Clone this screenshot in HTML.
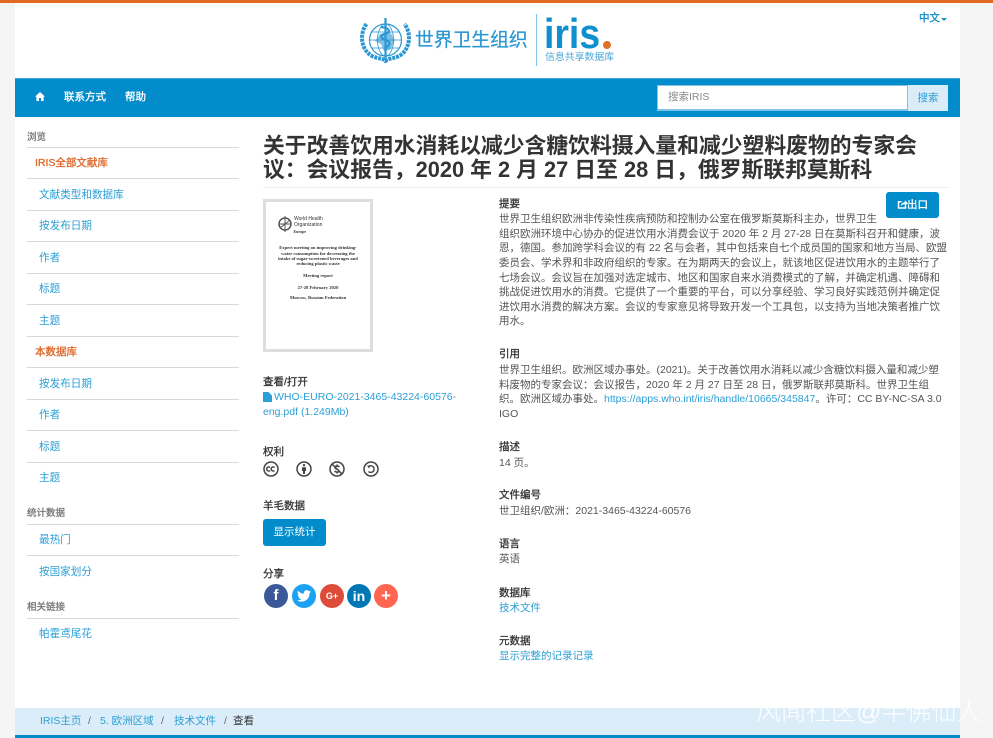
<!DOCTYPE html>
<html lang="zh"><head><meta charset="utf-8"><title>IRIS</title>
<style>
html{background:#f5f5f5}
html,body{margin:0;padding:0;width:993px;height:738px;overflow:hidden}
body{position:relative;font-family:"Liberation Sans","Noto Sans CJK SC",sans-serif;color:#555;background:#f5f5f5;filter:blur(.3px)}
.a{position:absolute;white-space:nowrap}
.t{font-size:10.5px;line-height:16px;height:16px}
a{color:#2b9fd6;text-decoration:none}
.l{position:absolute;left:27px;width:212px;height:1px;background:#d9d9d9}
.h{font-size:10.5px;line-height:16px;color:#333;font-weight:400;-webkit-text-stroke:.3px #333}
.side{font-size:10.6px;line-height:16px;color:#2b9fd6;left:39px}
.sh{font-size:9.5px;line-height:14px;color:#777;left:27px;font-weight:400;-webkit-text-stroke:.3px #777}
.or{color:#e06a2c;font-weight:400;-webkit-text-stroke:.35px #e06a2c;left:35px;font-size:10.5px;line-height:16px}
.c{position:absolute;border-radius:50%;width:24px;height:24px;color:#fff;text-align:center;font-weight:700;line-height:24px}
.cc{position:absolute;top:461px}
.b{font-size:10.5px;line-height:14.62px;color:#555}
.nv{font-size:10.5px;line-height:14px;color:#fff;-webkit-text-stroke:.3px #fff}
</style></head><body>
<div class="a" style="left:15px;top:0;width:945px;height:738px;background:#fff"></div>
<div class="a" style="left:0;top:0;width:993px;height:3px;background:#e06a24"></div>

<svg class="a" style="left:360px;top:17px" width="52" height="46" viewBox="0 0 52 46" fill="none" stroke="#2a97d2">
<circle cx="25.500" cy="23" r="16" stroke-width="1.200"/><ellipse cx="25.500" cy="23" rx="8" ry="16" stroke-width=".8"/><path d="M9.500 23H41.500M11.500 15H39.500M11.500 31H39.500" stroke-width=".8"/>
<path d="M20 17L30 15L35 23L30 33L24 34L21 27L15 24Z" fill="#2a97d2" stroke="none" opacity=".6"/>
<path d="M25.500 1V41" stroke-width="2.200"/><path d="M21 10C30 11 31 15 25.500 16.500C20 18 20 21 25.500 23C31 25 31 28 25.500 30" stroke-width="2.200"/>
<path d="M6.500 7C-1 17 1 33 12 39C18 42 23 41 25.500 44C28 41 33 42 39 39C50 33 52 17 44.500 7" stroke-width="4" stroke-dasharray="3 .9"/>
</svg>
<div class="a" style="left:415px;top:28px;font-size:18.800px;line-height:24px;color:#2a97d2;-webkit-text-stroke:.25px #2a97d2">世界卫生组织</div>
<div class="a" style="left:536px;top:14px;width:1px;height:52px;background:#84c4e6"></div>
<div class="a" style="left:544px;top:10.500px;font-size:42px;line-height:46px;font-weight:700;color:#0f8fce;transform:scaleX(.89);transform-origin:left top">iris</div>
<div class="a" style="left:603px;top:41px;width:8px;height:8px;border-radius:50%;background:#e0702a"></div>
<div class="a" style="left:545px;top:51px;font-size:9.900px;line-height:14px;color:#4ba6d8">信息共享数据库</div>
<div class="a" style="left:919px;top:11px;font-size:10.5px;line-height:14px;color:#148fcc;-webkit-text-stroke:.35px #148fcc">中文</div>
<div class="a" style="left:941px;top:18px;border:3px solid transparent;border-top-color:#148fcc;border-bottom:0"></div>

<div class="a" style="left:15px;top:78px;width:945px;height:39px;background:#038ccb;border-top:1px solid #3aa6da;box-sizing:border-box"></div>
<svg class="a" style="left:35px;top:92px" width="10" height="9" viewBox="0 0 10 9"><path d="M5 0L10 4.600H8.600V9H6V6H4V9H1.400V4.600H0Z" fill="#fff"/></svg>
<div class="a nv" style="left:64px;top:90px">联系方式</div>
<div class="a nv" style="left:125px;top:90px">帮助</div>
<div class="a" style="left:657px;top:85px;width:251px;height:26px;background:#fff;border:1px solid #7fc3e6;border-bottom:2px solid #7fc3e6;box-sizing:border-box;padding-left:10px;font-size:10.5px;line-height:23px;color:#888">搜索IRIS</div>
<div class="a" style="left:908px;top:85px;width:40px;height:26px;background:#d9ecf8;box-sizing:border-box;text-align:center;font-size:10.5px;line-height:26px;color:#2b9fd6">搜索</div>

<div class="sh a" style="top:131px">浏览</div><div class="l" style="top:147px"></div>
<div class="a or" style="top:155px">IRIS全部文献库</div><div class="l" style="top:178px"></div>
<div class="a side" style="top:187px">文献类型和数据库</div><div class="l" style="top:210px"></div>
<div class="a side" style="top:218px">按发布日期</div><div class="l" style="top:241px"></div>
<div class="a side" style="top:250px">作者</div><div class="l" style="top:273px"></div>
<div class="a side" style="top:281px">标题</div><div class="l" style="top:304px"></div>
<div class="a side" style="top:313px">主题</div><div class="l" style="top:336px"></div>
<div class="a or" style="top:344px">本数据库</div><div class="l" style="top:367px"></div>
<div class="a side" style="top:376px">按发布日期</div><div class="l" style="top:399px"></div>
<div class="a side" style="top:407px">作者</div><div class="l" style="top:430px"></div>
<div class="a side" style="top:439px">标题</div><div class="l" style="top:462px"></div>
<div class="a side" style="top:470px">主题</div>
<div class="sh a" style="top:507px">统计数据</div><div class="l" style="top:524px"></div>
<div class="a side" style="top:532px">最热门</div><div class="l" style="top:555px"></div>
<div class="a side" style="top:564px">按国家划分</div>
<div class="sh a" style="top:601px">相关链接</div><div class="l" style="top:618px"></div>
<div class="a side" style="top:626px">帕霍鸢尾花</div>

<div class="a" style="left:263px;top:134px;font-size:21.800px;line-height:23.500px;font-weight:700;color:#333">关于改善饮用水消耗以减少含糖饮料摄入量和减少塑料废物的专家会<br>议：会议报告，2020 年 2 月 27 日至 28 日，俄罗斯联邦莫斯科</div>
<div class="a" style="left:263px;top:187px;width:685px;height:1px;background:#eee"></div>

<div class="a" style="left:263px;top:199px;width:110px;height:153px;border:3px solid #ddd;box-sizing:border-box;background:#fff;overflow:hidden;color:#333;font-family:'Liberation Serif',serif;text-align:center;font-size:4.600px;line-height:5.300px;font-weight:700">
<svg style="position:absolute;left:11px;top:14px" width="16" height="16" viewBox="0 0 16 16"><circle cx="8" cy="8" r="6" fill="none" stroke="#555" stroke-width="1.500"/><path d="M8 0V16M2 8H14M3 12L13 4" stroke="#555"/></svg>
<div style="position:absolute;left:28px;top:15px;font:400 5px/5.500px 'Liberation Sans',sans-serif;text-align:left">World Health<br>Organization</div>
<div style="position:absolute;left:27.500px;top:27px;font-size:4px">Europe</div>
<div style="position:absolute;left:0;right:0;top:43.400px">Expert meeting on improving drinking-<br>water consumption for decreasing the<br>intake of sugar-sweetened beverages and<br>reducing plastic waste</div>
<div style="position:absolute;left:0;right:0;top:71px">Meeting report</div>
<div style="position:absolute;left:0;right:0;top:82.500px">27-28 February 2020</div>
<div style="position:absolute;left:0;right:0;top:92.500px">Moscow, Russian Federation</div>
</div>

<div class="a h" style="left:263px;top:374px">查看/打开</div>
<svg class="a" style="left:263px;top:392px" width="9" height="10" viewBox="0 0 9 10"><path d="M0 0H5.500L9 3.500V10H0Z" fill="#2b9fd6"/></svg>
<a class="a" style="left:274px;top:390px;font-size:10.500px;line-height:15px">WHO-EURO-2021-3465-43224-60576-</a>
<a class="a" style="left:263px;top:405px;font-size:10.500px;line-height:15px">eng.pdf (1.249Mb)</a>

<div class="a h" style="left:263px;top:444px">权利</div>
<svg class="cc" style="left:263px" width="16" height="16" viewBox="0 0 16 16" fill="none" stroke="#444" stroke-width="1.500"><circle cx="8" cy="8" r="7"/><path d="M7 6.500A2 2 0 1 0 7 9.500M11.500 6.500A2 2 0 1 0 11.500 9.500"/></svg>
<svg class="cc" style="left:296px" width="16" height="16" viewBox="0 0 16 16" fill="none" stroke="#444" stroke-width="1.500"><circle cx="8" cy="8" r="7"/><circle cx="8" cy="4.200" r="1.200" fill="#444" stroke="none"/><path d="M6 6.300H10V10H9V13H7V10H6Z" fill="#444" stroke="none"/></svg>
<svg class="cc" style="left:329px" width="16" height="16" viewBox="0 0 16 16" fill="none" stroke="#444" stroke-width="1.500"><circle cx="8" cy="8" r="7"/><path d="M3 3L13 13M10.500 6C9 4.500 6 5 6 6.500S10 8.500 10 10S7 11.500 5.500 10M8 3.500V5M8 11V12.500"/></svg>
<svg class="cc" style="left:363px" width="16" height="16" viewBox="0 0 16 16" fill="none" stroke="#444" stroke-width="1.500"><circle cx="8" cy="8" r="7"/><path d="M6 5.300A3.300 3.300 0 1 1 5.500 10.500"/><path d="M4 4.500L7.500 4.500L6 7.500Z" fill="#444" stroke="none"/></svg>

<div class="a h" style="left:263px;top:498px">羊毛数据</div>
<div class="a" style="left:263px;top:519px;width:63px;height:27px;background:#038ccb;border-radius:3px;color:#fff;text-align:center;font-size:10.5px;line-height:27px">显示统计</div>
<div class="a h" style="left:263px;top:566px">分享</div>
<div class="c" style="left:264px;top:584px;background:#3b5998;font-size:15px;font-family:'Liberation Sans',sans-serif">f</div>
<div class="c" style="left:292px;top:584px;background:#1da1f2"><svg width="14" height="12" viewBox="0 0 24 20" style="margin-top:6px;display:block;margin-left:5px"><path d="M24 2.400c-.9.4-1.800.7-2.800.8 1-.6 1.800-1.600 2.200-2.700-1 .6-2 1-3.100 1.200C19.300.7 18 0 16.600 0c-2.700 0-4.900 2.200-4.900 4.900 0 .4 0 .8.100 1.100C7.700 5.800 4.100 3.900 1.700.9c-.4.700-.7 1.600-.7 2.500 0 1.700.9 3.200 2.200 4.100-.8 0-1.600-.2-2.200-.6v.1c0 2.400 1.700 4.400 3.900 4.800-.7.200-1.500.2-2.200.1.600 2 2.400 3.400 4.600 3.400-2.100 1.700-4.700 2.500-7.300 2.200C2.200 18.900 4.800 19.700 7.500 19.700c9.100 0 14-7.500 14-14v-.6c1-.7 1.800-1.600 2.500-2.700z" fill="#fff"/></svg></div>
<div class="c" style="left:320px;top:584px;background:#dd4b39;font-size:9px">G+</div>
<div class="c" style="left:347px;top:584px;background:#0077b5;font-size:14px">in</div>
<div class="c" style="left:374px;top:584px;background:#ff6550;font-size:17px">+</div>

<div class="a h" style="left:499px;top:196px">提要</div>
<div class="a" style="left:886px;top:192px;width:53px;height:26px;background:#038ccb;border-radius:3px"></div>
<svg class="a" style="left:897px;top:199px" width="11" height="11" viewBox="0 0 11 11" fill="none"><path d="M8.500 6.500V9H1.500V2.800H4.500" stroke="#fff" stroke-width="1.500"/><path d="M3.800 7C4 4.500 5.800 3.400 7.800 3.400V1.300L11 4.200L7.800 7V5.200C6.300 5.200 4.800 5.700 3.800 7Z" fill="#fff"/></svg>
<div class="a nv" style="left:907px;top:198px">出口</div>
<div class="a b" style="left:499px;top:212px">世界卫生组织欧洲非传染性疾病预防和控制办公室在俄罗斯莫斯科主办，世界卫生<br>组织欧洲环境中心协办的促进饮用水消费会议于 2020 年 2 月 27-28 日在莫斯科召开和健康，波<br>恩，德国。参加跨学科会议的有 22 名与会者，其中包括来自七个成员国的国家和地方当局、欧盟<br>委员会、学术界和非政府组织的专家。在为期两天的会议上，就该地区促进饮用水的主题举行了<br>七场会议。会议旨在加强对选定城市、地区和国家自来水消费模式的了解，并确定机遇、障碍和<br>挑战促进饮用水的消费。它提供了一个重要的平台，可以分享经验、学习良好实践范例并确定促<br>进饮用水消费的解决方案。会议的专家意见将导致开发一个工具包，以支持为当地决策者推广饮<br>用水。</div>

<div class="a h" style="left:499px;top:346px">引用</div>
<div class="a b" style="left:499px;top:363px">世界卫生组织。欧洲区域办事处。(2021)。关于改善饮用水消耗以减少含糖饮料摄入量和减少塑<br>料废物的专家会议：会议报告，2020 年 2 月 27 日至 28 日，俄罗斯联邦莫斯科。世界卫生组<br>织。欧洲区域办事处。<a>https://apps.who.int/iris/handle/10665/345847</a>。许可：CC BY-NC-SA 3.0<br>IGO</div>

<div class="a h" style="left:499px;top:439px">描述</div>
<div class="a t" style="left:499px;top:455px">14 页。</div>
<div class="a h" style="left:499px;top:487px">文件编号</div>
<div class="a t" style="left:499px;top:503px">世卫组织/欧洲：2021-3465-43224-60576</div>
<div class="a h" style="left:499px;top:536px">语言</div>
<div class="a t" style="left:499px;top:551px">英语</div>
<div class="a h" style="left:499px;top:585px">数据库</div>
<a class="a t" style="left:499px;top:600px">技术文件</a>
<div class="a h" style="left:499px;top:633px">元数据</div>
<a class="a t" style="left:499px;top:648px">显示完整的记录记录</a>

<div class="a" style="left:15px;top:708px;width:945px;height:27px;background:#dbedf9"></div>
<div class="a" style="left:15px;top:735px;width:945px;height:3px;background:#038ccb"></div>
<a class="a t" style="left:40px;top:713px">IRIS主页</a>
<div class="a t" style="left:88px;top:713px;color:#666">/</div>
<a class="a t" style="left:100px;top:713px">5. 欧洲区域</a>
<div class="a t" style="left:161px;top:713px;color:#666">/</div>
<a class="a t" style="left:174px;top:713px">技术文件</a>
<div class="a t" style="left:224px;top:713px;color:#666">/</div>
<div class="a t" style="left:233px;top:713px;color:#333">查看</div>
<div class="a" style="left:756px;top:698px;font-size:25px;line-height:28px;color:rgba(255,255,255,.9);font-weight:300">风闻社区@半佛仙人</div>
</body></html>
